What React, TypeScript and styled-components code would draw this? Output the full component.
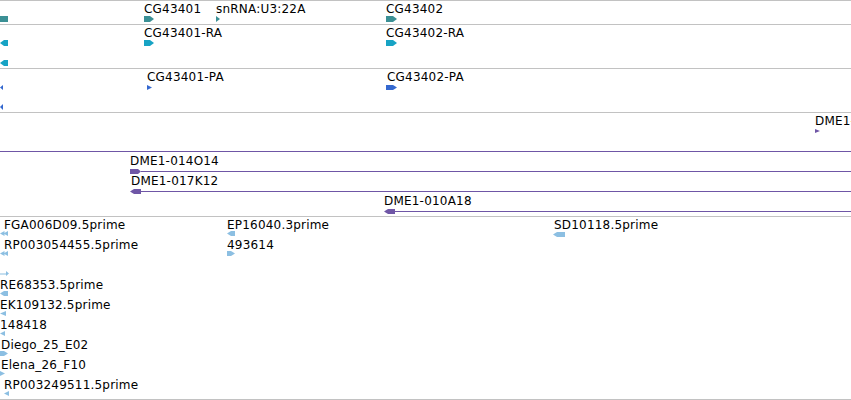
import React, { FC } from "react";
import styled, { createGlobalStyle } from "styled-components";

const GlobalStyle = createGlobalStyle`
    html, body {
        margin: 0;
        padding: 0;
        background: #ffffff;
        overflow: hidden;
    }
`;

type Kind = "box" | "arrowR" | "arrowL" | "triR" | "triL" | "dblL" | "thinR" | "line" | "cloneR" | "cloneL";

interface Feat {
    x: number;
    top: number;
    label?: string;
    lx?: number;
    gx?: number;
    kind: Kind;
    w: number;
    y0?: number;
    y1?: number;
}

interface TrackDef {
    height: number;
    color: string;
    y0: number;
    y1: number;
    lineHeight: number;
    features: Feat[];
}

const Panel = styled.div`
    width: 851px;
    border-top: 1px solid #c2c2c2;
    background: #ffffff;
`;

const Track = styled.div<{ $h: number }>`
    position: relative;
    height: ${(p) => p.$h}px;
    border-bottom: 1px solid #c2c2c2;
    overflow: hidden;
`;

const Feature = styled.div<{ $x: number; $y: number }>`
    position: absolute;
    left: ${(p) => p.$x}px;
    top: ${(p) => p.$y}px;
`;

const Label = styled.span<{ $dx: number; $lh: number }>`
    display: block;
    height: 12px;
    padding-left: ${(p) => p.$dx}px;
    font-family: "DejaVu Sans", "Liberation Sans", sans-serif;
    font-size: 12px;
    line-height: ${(p) => p.$lh}px;
    letter-spacing: 0.2px;
    color: #000000;
    white-space: nowrap;
`;

const GlyphSvg = styled.svg<{ $dx: number }>`
    display: block;
    margin-left: ${(p) => p.$dx}px;
    overflow: visible;
`;

// polygon points for each glyph kind, drawn in an 8px tall box
const shapes = (kind: Kind, w: number, y0: number, y1: number): string[] => {
    const mid = (y0 + y1) / 2;
    const t = Math.min(4, w / 2);
    switch (kind) {
        case "box":
            return [`0,${y0} ${w},${y0} ${w},${y1} 0,${y1}`];
        case "arrowR":
            return [`0,${y0} ${w - t},${y0} ${w},${mid} ${w - t},${y1} 0,${y1}`];
        case "arrowL":
            return [`${w},${y0} ${t},${y0} 0,${mid} ${t},${y1} ${w},${y1}`];
        case "triR":
            return [`0,${y0} ${w},${mid} 0,${y1}`];
        case "triL":
            return [`${w},${y0} 0,${mid} ${w},${y1}`];
        case "dblL":
            return [`${w / 2 + 0.5},${y0} 0,${mid} ${w / 2 + 0.5},${y1}`, `${w},${y0} ${w / 2 - 0.5},${mid} ${w},${y1}`];
        case "thinR":
            return [`0,3.5 ${w - 3},3.5 ${w - 3},${y0} ${w},${mid} ${w - 3},${y1} ${w - 3},4.5 0,4.5`];
        case "line":
            return [`0,4 ${w},4 ${w},5 0,5`];
        case "cloneR":
            return [`0,${y0} 8,${y0} 11,${mid} 8,${y1} 0,${y1}`, `11,4 ${w},4 ${w},5 11,5`];
        case "cloneL":
            return [`11,${y0} 4,${y0} 0,${mid} 4,${y1} 11,${y1}`, `11,4 ${w},4 ${w},5 11,5`];
    }
};

const Glyph: FC<{ f: Feat; color: string; y0: number; y1: number }> = ({ f, color, y0, y1 }) => (
    <GlyphSvg $dx={f.gx ?? 0} width={f.w} height={8} viewBox={`0 0 ${f.w} 8`}>
        {shapes(f.kind, f.w, f.y0 ?? y0, f.y1 ?? y1).map((pts, i) => (
            <polygon key={i} points={pts} fill={color} />
        ))}
    </GlyphSvg>
);

const tracks: TrackDef[] = [
    {
        height: 23,
        color: "#3b9095",
        y0: 1,
        y1: 7,
        lineHeight: 12,
        features: [
            { x: 0, top: 2, kind: "box", w: 8 },
            { x: 144, top: 2, label: "CG43401", kind: "arrowR", w: 10 },
            { x: 216, top: 2, label: "snRNA:U3:22A", kind: "triR", w: 4 },
            { x: 386, top: 2, label: "CG43402", kind: "arrowR", w: 11 },
        ],
    },
    {
        height: 43,
        color: "#17a3c4",
        y0: 1,
        y1: 7,
        lineHeight: 12,
        features: [
            { x: 0, top: 2, kind: "arrowL", w: 8 },
            { x: 0, top: 22, kind: "arrowL", w: 8 },
            { x: 144, top: 2, label: "CG43401-RA", kind: "arrowR", w: 10 },
            { x: 386, top: 2, label: "CG43402-RA", kind: "arrowR", w: 11 },
        ],
    },
    {
        height: 43,
        color: "#3468cf",
        y0: 2,
        y1: 7,
        lineHeight: 12,
        features: [
            { x: 0, top: 2, kind: "triL", w: 3 },
            { x: 0, top: 22, kind: "triL", w: 3, y0: 1, y1: 7 },
            { x: 147, top: 2, label: "CG43401-PA", kind: "triR", w: 5 },
            { x: 386, top: 2, label: "CG43402-PA", lx: 1, kind: "arrowR", w: 11 },
        ],
    },
    {
        height: 103,
        color: "#6f56a6",
        y0: 2,
        y1: 7,
        lineHeight: 12,
        features: [
            { x: 815, top: 2, label: "DME1-", kind: "triR", w: 5, y0: 2, y1: 6 },
            { x: 0, top: 22, kind: "line", w: 851 },
            { x: 130, top: 42, label: "DME1-014O14", kind: "cloneR", w: 721 },
            { x: 130, top: 62, label: "DME1-017K12", lx: 1, kind: "cloneL", w: 721 },
            { x: 384, top: 82, label: "DME1-010A18", kind: "cloneL", w: 467 },
        ],
    },
    {
        height: 182,
        color: "#8cbfe2",
        y0: 1,
        y1: 6,
        lineHeight: 14,
        features: [
            { x: 0, top: 1, label: "FGA006D09.5prime", lx: 4, kind: "dblL", w: 8 },
            { x: 0, top: 21, label: "RP003054455.5prime", lx: 4, kind: "dblL", w: 8 },
            { x: 227, top: 1, label: "EP16040.3prime", kind: "arrowL", w: 8 },
            { x: 227, top: 21, label: "493614", kind: "arrowR", w: 8 },
            { x: 553, top: 1, label: "SD10118.5prime", lx: 1, kind: "arrowL", w: 12, y0: 2, y1: 7 },
            { x: 0, top: 41, kind: "thinR", w: 9 },
            { x: 0, top: 61, label: "RE68353.5prime", kind: "arrowL", w: 8 },
            { x: 0, top: 81, label: "EK109132.5prime", kind: "triL", w: 6 },
            { x: 0, top: 101, label: "148418", kind: "triL", w: 5 },
            { x: 0, top: 121, label: "Diego_25_E02", lx: 1, kind: "arrowR", w: 8 },
            { x: 0, top: 141, label: "Elena_26_F10", lx: 1, kind: "triR", w: 5 },
            { x: 0, top: 161, label: "RP003249511.5prime", lx: 4, gx: 4, kind: "triL", w: 5 },
        ],
    },
];

const App: FC = () => {
    return (
        <>
            <GlobalStyle />
            <Panel>
                {tracks.map((t, ti) => (
                    <Track key={ti} $h={t.height}>
                        {t.features.map((f, fi) => (
                            <Feature key={fi} $x={f.x} $y={f.top}>
                                <Label $dx={f.lx ?? 0} $lh={t.lineHeight}>
                                    {f.label ?? ""}
                                </Label>
                                <Glyph f={f} color={t.color} y0={t.y0} y1={t.y1} />
                            </Feature>
                        ))}
                    </Track>
                ))}
            </Panel>
        </>
    );
};

export default App;
